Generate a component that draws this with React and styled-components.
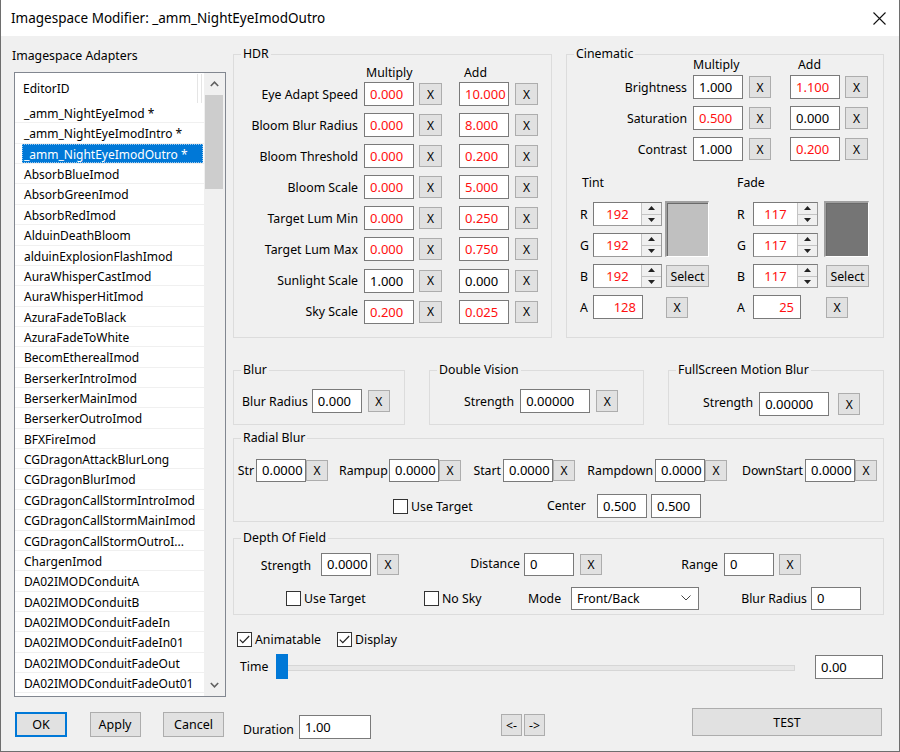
import React from "react";
import styled, { createGlobalStyle } from "styled-components";

const FONT = `"Noto Sans", "Open Sans", "DejaVu Sans", sans-serif`;

const GlobalStyle = createGlobalStyle`
  * { box-sizing: border-box; }
  html, body { margin: 0; padding: 0; background: #f0f0f0; }
  body { font-family: ${FONT}; font-size: 12.3px; color: #000; }
  input, button { font-family: inherit; }
`;

const Window = styled.div`
  width: 900px;
  height: 752px;
  display: flex;
  flex-direction: column;
  background: #f0f0f0;
  border: 1px solid #6e6e6e;
  border-top: 0;
  overflow: hidden;
`;

const TitleBar = styled.div`
  height: 36px;
  flex: none;
  background: #fff;
  display: flex;
  align-items: center;
  padding: 0 13px 0 10px;
  font-size: 13.5px;
`;

const Title = styled.div`
  flex: 1;
`;

const Body = styled.div`
  flex: 1;
  display: flex;
  min-height: 0;
`;

/* ---------- left pane ---------- */
const LeftPane = styled.div`
  width: 232px;
  flex: none;
  display: flex;
  flex-direction: column;
  padding: 12px 0 0 11px;
`;

const PaneLabel = styled.div`
  height: 16px;
  line-height: 16px;
  margin-bottom: 8px;
`;

const ListBox = styled.div`
  margin-left: 2px;
  width: 212px;
  height: 625px;
  flex: none;
  border: 1px solid #828790;
  background: #fff;
  display: flex;
  overflow: hidden;
`;

const ListMain = styled.div`
  width: 189px;
  flex: none;
  display: flex;
  flex-direction: column;
  overflow: hidden;
  font-size: 12px;
`;

const ListHeader = styled.div`
  height: 30px;
  flex: none;
  display: flex;
  align-items: center;
  padding: 1px 0 0 8px;
`;

const HeaderDivider = styled.div`
  margin-left: auto;
  margin-right: 2px;
  width: 5px;
  align-self: stretch;
  border-left: 1px solid #e5e5e5;
  border-right: 1px solid #e5e5e5;
`;

const ListRow = styled.div`
  height: 20.36px;
  flex: none;
  border-bottom: 1px solid #f0f0f0;
  display: flex;
  padding: 0 1px 0 7px;
`;

const ListText = styled.div`
  flex: 1;
  padding: 2px 0 0 2px;
  line-height: 17px;
  white-space: nowrap;
  overflow: hidden;
  background: ${(p) => (p.$selected ? "#0078d7" : "transparent")};
  color: ${(p) => (p.$selected ? "#fff" : "#000")};
  outline: ${(p) => (p.$selected ? "1px dotted rgba(255,255,255,0.6)" : "none")};
  outline-offset: -1px;
`;

const ScrollBar = styled.div`
  width: 21px;
  flex: none;
  display: flex;
  flex-direction: column;
  background: #f0f0f0;
`;

const ScrollButton = styled.div`
  height: 22px;
  flex: none;
  display: flex;
  align-items: center;
  justify-content: center;
`;

const ScrollThumb = styled.div`
  height: 94px;
  flex: none;
  margin: 0 2px 0 1px;
  background: #cdcdcd;
`;

const ScrollSpacer = styled.div`
  flex: 1;
`;

const Chevron = ({ up }) => (
  <svg width="9" height="6" viewBox="0 0 9 6">
    <path
      d={up ? "M0.8 5 L4.5 1.2 L8.2 5" : "M0.8 1 L4.5 4.8 L8.2 1"}
      stroke="#606060"
      strokeWidth="1.6"
      fill="none"
    />
  </svg>
);

const DialogButtons = styled.div`
  margin-top: 15px;
  width: 212px;
  padding-left: 3px;
  display: flex;
  justify-content: space-between;
`;

const DialogButton = styled.button`
  width: ${(p) => p.$w}px;
  height: 25px;
  padding: 0;
  background: #e1e1e1;
  border: 1px solid ${(p) => (p.$default ? "#0078d7" : "#adadad")};
  box-shadow: ${(p) => (p.$default ? "inset 0 0 0 1px #0078d7" : "none")};
  font-size: 12.5px;
  color: #000;
`;

/* ---------- right pane ---------- */
const RightPane = styled.div`
  flex: 1;
  display: flex;
  flex-direction: column;
  padding: 11px 15px 0 0;
`;

const TopRow = styled.div`
  display: flex;
  gap: 14px;
`;

const GroupBox = styled.fieldset`
  margin: 0;
  padding: 0;
  min-width: 0;
  border: 1px solid #dcdcdc;
  width: ${(p) => (p.$w ? `${p.$w}px` : "auto")};
  height: ${(p) => p.$h}px;
  flex: none;
  margin-top: ${(p) => p.$mt || 0}px;
`;

const Legend = styled.legend`
  margin-left: 7px;
  padding: 0 2px;
  font-size: 12.3px;
  line-height: 14px;
`;

const GroupContent = styled.div`
  display: flex;
  flex-direction: column;
  padding-top: ${(p) => p.$pt || 0}px;
`;

const ColHeaders = styled.div`
  display: grid;
  grid-template-columns: ${(p) => p.$cols};
  height: 14px;
  line-height: 14px;
  margin-top: ${(p) => p.$mt || 0}px;
  margin-bottom: ${(p) => p.$mb || 0}px;
`;

const ColHead = styled.div`
  grid-column: ${(p) => p.$col};
  padding-left: ${(p) => p.$pl || 0}px;
  white-space: nowrap;
`;

const ValueGrid = styled.div`
  display: grid;
  grid-template-columns: ${(p) => p.$cols};
  grid-auto-rows: 24px;
  row-gap: ${(p) => p.$gap}px;
  align-items: center;
  justify-items: start;
`;

const RowLabel = styled.div`
  justify-self: stretch;
  text-align: right;
  padding-right: 6px;
  white-space: nowrap;
`;

const ValueInput = styled.input`
  width: ${(p) => p.$w || 50}px;
  height: ${(p) => p.$h || 24}px;
  flex: none;
  margin: 0;
  margin-left: ${(p) => p.$ml || 0}px;
  padding: 0 ${(p) => (p.$align === "right" ? 6 : 2)}px 0 5px;
  border: 1px solid #7a7a7a;
  background: #fff;
  color: ${(p) => (p.$red ? "#ff1010" : "#000")};
  font-size: 13px;
  text-align: ${(p) => p.$align || "left"};
  outline: none;
`;

const XButton = styled.button`
  width: ${(p) => p.$w || 23}px;
  height: ${(p) => p.$h || 22}px;
  flex: none;
  margin: 0;
  margin-left: ${(p) => p.$ml || 0}px;
  padding: 0;
  background: #e1e1e1;
  border: 1px solid #adadad;
  font-size: 12px;
  color: #000;
`;

const Value = ({ v, red, ...rest }) => (
  <ValueInput readOnly value={v} $red={red} {...rest} />
);

/* color section */
const ColorRow = styled.div`
  display: flex;
  gap: 27px;
  margin-top: 15px;
  padding-left: 13px;
`;

const ColorGroup = styled.div`
  display: grid;
  grid-template-columns: ${(p) => `${p.$lw}px ${p.$sw + p.$gap}px 45px`};
  grid-template-rows: 19px repeat(4, 24px);
  row-gap: 7px;
  align-items: center;
  justify-items: start;
`;

const ColorHeader = styled.div`
  grid-column: 1 / -1;
  align-self: start;
  line-height: 14px;
  padding-left: ${(p) => p.$pl || 0}px;
`;

const Letter = styled.div`
  grid-column: 1;
`;

const SpinBox = styled.div`
  grid-column: 2;
  width: ${(p) => p.$w}px;
  height: 24px;
  display: flex;
  border: 1px solid #9a9a9a;
  border-top-color: #7a7a7a;
  border-left-color: #7a7a7a;
  background: #fff;
`;

const SpinValue = styled.div`
  flex: 1;
  text-align: center;
  line-height: 22px;
  color: #ff1010;
  font-size: 13px;
`;

const SpinButtons = styled.div`
  width: 20px;
  flex: none;
  display: flex;
  flex-direction: column;
  border-left: 1px solid #c4c4c4;
  background: #f0f0f0;
`;

const SpinHalf = styled.div`
  flex: 1;
  display: flex;
  align-items: center;
  justify-content: center;
  & + & {
    border-top: 1px solid #c4c4c4;
  }
`;

const Tri = ({ up }) => (
  <svg width="7" height="4" viewBox="0 0 7 4">
    <path d={up ? "M0 4 L3.5 0 L7 4 Z" : "M0 0 L3.5 4 L7 0 Z"} fill="#222" />
  </svg>
);

const Swatch = styled.div`
  grid-column: 3;
  grid-row: 2 / span 2;
  align-self: stretch;
  margin-top: -1px;
  width: ${(p) => p.$w}px;
  background: ${(p) => p.$c};
  border-top: 2px solid #a0a0a0;
  border-left: 2px solid #a0a0a0;
  border-right: 1px solid #fff;
  border-bottom: 1px solid #fff;
  box-shadow: inset 1px 1px 0 #6a6a6a;
`;

const SmallButton = styled.button`
  grid-column: 3;
  width: ${(p) => p.$w}px;
  height: ${(p) => p.$h}px;
  margin: 0;
  margin-left: ${(p) => p.$ml || 0}px;
  padding: 0;
  background: #e1e1e1;
  border: 1px solid #adadad;
  font-size: 12.3px;
  color: #000;
`;

const AInput = styled(ValueInput)`
  grid-column: 2;
`;

/* middle rows */
const MidRow = styled.div`
  display: flex;
  justify-content: space-between;
  margin-top: 25px;
`;

const InlineContent = styled.div`
  display: flex;
  align-items: center;
  padding: ${(p) => p.$pt}px 0 0 ${(p) => p.$pl}px;
`;

const InlineLabel = styled.span`
  white-space: nowrap;
  margin-right: ${(p) => p.$mr || 0}px;
  margin-top: ${(p) => p.$shift > 0 ? p.$shift * 2 : 0}px;
  margin-bottom: ${(p) => p.$shift < 0 ? -p.$shift * 2 : 0}px;
`;

const RadialRow = styled.div`
  display: flex;
  gap: 11px;
  align-items: center;
  padding-left: 3px;
`;

const RadialField = styled.div`
  display: grid;
  grid-template-columns: ${(p) => p.$lw}px 50px 22px;
  align-items: center;
  height: 24px;
`;

const FieldLabel = styled.div`
  text-align: ${(p) => p.$align || "right"};
  padding-right: ${(p) => (p.$pr === undefined ? 2 : p.$pr)}px;
  white-space: nowrap;
  width: ${(p) => (p.$w ? `${p.$w}px` : "auto")};
  flex: none;
  margin-top: ${(p) => p.$shift > 0 ? p.$shift * 2 : 0}px;
  margin-bottom: ${(p) => p.$shift < 0 ? -p.$shift * 2 : 0}px;
`;

const FlexRow = styled.div`
  display: flex;
  align-items: center;
  height: ${(p) => p.$h || 24}px;
  margin-top: ${(p) => p.$mt || 0}px;
  padding-left: ${(p) => p.$pl || 0}px;
`;

const CheckItem = styled.label`
  display: flex;
  align-items: center;
  width: ${(p) => (p.$w ? `${p.$w}px` : "auto")};
  flex: none;
  white-space: nowrap;
`;

const CheckBox = styled.span`
  width: 15px;
  height: 15px;
  flex: none;
  border: 1px solid #333;
  background: #fff;
  display: flex;
  align-items: center;
  justify-content: center;
  margin-right: 3px;
`;

const Check = ({ checked }) => (
  <CheckBox>
    {checked && (
      <svg width="11" height="9" viewBox="0 0 11 9">
        <path d="M0.8 4.6 L3.8 7.6 L10.2 1" stroke="#222" strokeWidth="1.2" fill="none" />
      </svg>
    )}
  </CheckBox>
);

const ComboBox = styled.div`
  width: ${(p) => p.$w}px;
  height: 23px;
  flex: none;
  display: flex;
  align-items: center;
  justify-content: space-between;
  padding: 0 7px 0 5px;
  background: #fff;
  border: 1px solid #7a7a7a;
`;

/* time + bottom */
const Slider = styled.div`
  position: relative;
  width: 519px;
  height: 25px;
  flex: none;
  display: flex;
  align-items: center;
  &::before {
    content: "";
    position: absolute;
    left: 6px;
    right: 0;
    top: 11px;
    height: 4px;
    background: #e7e7e7;
    border: 1px solid #d6d6d6;
  }
`;

const SliderThumb = styled.div`
  position: relative;
  width: 12px;
  height: 25px;
  background: #0078d7;
`;

const BottomRow = styled.div`
  display: flex;
  align-items: flex-start;
  margin-top: 28px;
`;

const DurationGroup = styled.div`
  display: flex;
  align-items: center;
  margin: 7px 0 0 10px;
`;

const NavGroup = styled.div`
  display: flex;
  gap: 2px;
  margin: 6px 0 0 130px;
`;

const TestButton = styled.button`
  margin: 0 2px 0 auto;
  width: 190px;
  height: 28px;
  padding: 0;
  background: #e1e1e1;
  border: 1px solid #adadad;
  font-size: 12.3px;
  color: #000;
`;

/* ---------- data ---------- */
const adapters = [
  "_amm_NightEyeImod *",
  "_amm_NightEyeImodIntro *",
  "_amm_NightEyeImodOutro *",
  "AbsorbBlueImod",
  "AbsorbGreenImod",
  "AbsorbRedImod",
  "AlduinDeathBloom",
  "alduinExplosionFlashImod",
  "AuraWhisperCastImod",
  "AuraWhisperHitImod",
  "AzuraFadeToBlack",
  "AzuraFadeToWhite",
  "BecomEtherealImod",
  "BerserkerIntroImod",
  "BerserkerMainImod",
  "BerserkerOutroImod",
  "BFXFireImod",
  "CGDragonAttackBlurLong",
  "CGDragonBlurImod",
  "CGDragonCallStormIntroImod",
  "CGDragonCallStormMainImod",
  "CGDragonCallStormOutroI...",
  "ChargenImod",
  "DA02IMODConduitA",
  "DA02IMODConduitB",
  "DA02IMODConduitFadeIn",
  "DA02IMODConduitFadeIn01",
  "DA02IMODConduitFadeOut",
  "DA02IMODConduitFadeOut01",
];

const hdrRows = [
  ["Eye Adapt Speed", "0.000", true, "10.000", true],
  ["Bloom Blur Radius", "0.000", true, "8.000", true],
  ["Bloom Threshold", "0.000", true, "0.200", true],
  ["Bloom Scale", "0.000", true, "5.000", true],
  ["Target Lum Min", "0.000", true, "0.250", true],
  ["Target Lum Max", "0.000", true, "0.750", true],
  ["Sunlight Scale", "1.000", false, "0.000", false],
  ["Sky Scale", "0.200", true, "0.025", true],
];

const cinRows = [
  ["Brightness", "1.000", false, "1.100", true],
  ["Saturation", "0.500", true, "0.000", false],
  ["Contrast", "1.000", false, "0.200", true],
];

const HDR_COLS = "130px 55px 40px 56px 23px";
const CIN_COLS = "126px 56px 41px 55px 23px";

function Spin({ w, v }) {
  return (
    <SpinBox $w={w}>
      <SpinValue>{v}</SpinValue>
      <SpinButtons>
        <SpinHalf>
          <Tri up />
        </SpinHalf>
        <SpinHalf>
          <Tri />
        </SpinHalf>
      </SpinButtons>
    </SpinBox>
  );
}

function ColorBlock({ title, lw, sw, gap, value, alpha, color, aw, btnMl, swW }) {
  return (
    <ColorGroup $lw={lw} $sw={sw} $gap={gap}>
      <ColorHeader $pl={title === "Tint" ? 2 : 0}>{title}</ColorHeader>
      <Letter>R</Letter>
      <Spin w={sw} v={value} />
      <Swatch $c={color} $w={swW} />
      <Letter>G</Letter>
      <Spin w={sw} v={value} />
      <Letter>B</Letter>
      <Spin w={sw} v={value} />
      <SmallButton $w={43} $h={22} $ml={btnMl}>Select</SmallButton>
      <Letter>A</Letter>
      <AInput readOnly value={alpha} $red $w={aw} $align="right" />
      <SmallButton $w={22} $h={21} $ml={btnMl}>X</SmallButton>
    </ColorGroup>
  );
}

export default function App() {
  return (
    <>
      <GlobalStyle />
      <Window>
        <TitleBar>
          <Title>Imagespace Modifier: _amm_NightEyeImodOutro</Title>
          <svg width="13" height="13" viewBox="0 0 13 13">
            <path d="M0.5 0.5 L12.5 12.5 M12.5 0.5 L0.5 12.5" stroke="#111" strokeWidth="1.1" />
          </svg>
        </TitleBar>
        <Body>
          <LeftPane>
            <PaneLabel>Imagespace Adapters</PaneLabel>
            <ListBox>
              <ListMain>
                <ListHeader>
                  <span>EditorID</span>
                  <HeaderDivider />
                </ListHeader>
                {adapters.map((a, i) => (
                  <ListRow key={a}>
                    <ListText $selected={i === 2}>{a}</ListText>
                  </ListRow>
                ))}
              </ListMain>
              <ScrollBar>
                <ScrollButton>
                  <Chevron up />
                </ScrollButton>
                <ScrollThumb />
                <ScrollSpacer />
                <ScrollButton>
                  <Chevron />
                </ScrollButton>
              </ScrollBar>
            </ListBox>
            <DialogButtons>
              <DialogButton $w={52} $default>OK</DialogButton>
              <DialogButton $w={51}>Apply</DialogButton>
              <DialogButton $w={61}>Cancel</DialogButton>
            </DialogButtons>
          </LeftPane>

          <RightPane>
            <TopRow>
              <GroupBox $w={319} $h={291}>
                <Legend>HDR</Legend>
                <GroupContent $pt={5}>
                  <ColHeaders $cols={HDR_COLS} $mb={2}>
                    <ColHead $col={2} $pl={2}>Multiply</ColHead>
                    <ColHead $col={4} $pl={5}>Add</ColHead>
                  </ColHeaders>
                  <ValueGrid $cols={HDR_COLS} $gap={7.1}>
                    {hdrRows.map(([label, m, mr, a, ar]) => (
                      <React.Fragment key={label}>
                        <RowLabel>{label}</RowLabel>
                        <Value v={m} red={mr} />
                        <XButton>X</XButton>
                        <Value v={a} red={ar} />
                        <XButton>X</XButton>
                      </React.Fragment>
                    ))}
                  </ValueGrid>
                </GroupContent>
              </GroupBox>

              <GroupBox $w={318} $h={291}>
                <Legend>Cinematic</Legend>
                <GroupContent>
                  <ColHeaders $cols={CIN_COLS} $mt={-3} $mb={3}>
                    <ColHead $col={2} $pl={0}>Multiply</ColHead>
                    <ColHead $col={4} $pl={8}>Add</ColHead>
                  </ColHeaders>
                  <ValueGrid $cols={CIN_COLS} $gap={7}>
                    {cinRows.map(([label, m, mr, a, ar]) => (
                      <React.Fragment key={label}>
                        <RowLabel>{label}</RowLabel>
                        <Value v={m} red={mr} />
                        <XButton $w={22}>X</XButton>
                        <Value v={a} red={ar} />
                        <XButton>X</XButton>
                      </React.Fragment>
                    ))}
                  </ValueGrid>
                  <ColorRow>
                    <ColorBlock title="Tint" lw={13} sw={69} gap={3} value="192" alpha="128" color="#c0c0c0" aw={50} btnMl={1} swW={44} />
                    <ColorBlock title="Fade" lw={16} sw={65} gap={6} value="117" alpha="25" color="#757575" aw={48} btnMl={2} swW={45} />
                  </ColorRow>
                </GroupContent>
              </GroupBox>
            </TopRow>

            <MidRow>
              <GroupBox $w={172} $h={62}>
                <Legend>Blur</Legend>
                <InlineContent $pt={12} $pl={8}>
                  <InlineLabel $mr={4}>Blur Radius</InlineLabel>
                  <Value v="0.000" />
                  <XButton $ml={6} $w={22}>X</XButton>
                </InlineContent>
              </GroupBox>
              <GroupBox $w={215} $h={62}>
                <Legend>Double Vision</Legend>
                <InlineContent $pt={12} $pl={34}>
                  <InlineLabel $mr={6}>Strength</InlineLabel>
                  <Value v="0.00000" $w={70} />
                  <XButton $ml={6} $w={22}>X</XButton>
                </InlineContent>
              </GroupBox>
              <GroupBox $w={216} $h={62}>
                <Legend>FullScreen Motion Blur</Legend>
                <InlineContent $pt={15} $pl={34}>
                  <InlineLabel $mr={6} $shift={-2}>Strength</InlineLabel>
                  <Value v="0.00000" $w={70} />
                  <XButton $ml={9} $w={22}>X</XButton>
                </InlineContent>
              </GroupBox>
            </MidRow>

            <GroupBox $h={91} $mt={6}>
              <Legend>Radial Blur</Legend>
              <GroupContent $pt={13}>
                <RadialRow>
                  {[
                    ["Str", 19],
                    ["Rampup", 50],
                    ["Start", 31],
                    ["Rampdown", 69],
                    ["DownStart", 67],
                  ].map(([l, lw]) => (
                    <RadialField key={l} $lw={lw}>
                      <FieldLabel $pr={2}>{l}</FieldLabel>
                      <Value v="0.0000" $h={23} />
                      <XButton $w={22} $h={21}>X</XButton>
                    </RadialField>
                  ))}
                </RadialRow>
                <FlexRow $mt={12} $pl={159}>
                  <CheckItem $w={154}>
                    <Check />
                    Use Target
                  </CheckItem>
                  <FieldLabel $w={50} $align="left" $pr={0} $shift={-1}>Center</FieldLabel>
                  <Value v="0.500" />
                  <Value v="0.500" $ml={4} />
                </FlexRow>
              </GroupContent>
            </GroupBox>

            <GroupBox $h={84} $mt={9}>
              <Legend>Depth Of Field</Legend>
              <GroupContent $pt={7}>
                <FlexRow>
                  <FieldLabel $w={87} $pr={10} $shift={1}>Strength</FieldLabel>
                  <Value v="0.0000" $h={23} />
                  <XButton $ml={6} $w={22} $h={21}>X</XButton>
                  <FieldLabel $w={125} $pr={4} $shift={-1}>Distance</FieldLabel>
                  <Value v="0" $h={23} />
                  <XButton $ml={6} $w={22} $h={21}>X</XButton>
                  <FieldLabel $w={122} $pr={6}>Range</FieldLabel>
                  <Value v="0" $h={23} />
                  <XButton $ml={5} $w={22} $h={21}>X</XButton>
                </FlexRow>
                <FlexRow $mt={10} $pl={52}>
                  <CheckItem $w={138}>
                    <Check />
                    Use Target
                  </CheckItem>
                  <CheckItem $w={104}>
                    <Check />
                    No Sky
                  </CheckItem>
                  <FieldLabel $w={43} $align="left" $pr={0}>Mode</FieldLabel>
                  <ComboBox $w={128}>
                    <span>Front/Back</span>
                    <svg width="10" height="6" viewBox="0 0 10 6">
                      <path d="M0.5 0.5 L5 5 L9.5 0.5" stroke="#444" strokeWidth="1" fill="none" />
                    </svg>
                  </ComboBox>
                  <FieldLabel $w={112} $pr={4}>Blur Radius</FieldLabel>
                  <Value v="0" $h={23} />
                </FlexRow>
              </GroupContent>
            </GroupBox>

            <FlexRow $h={16} $mt={16} $pl={4}>
              <CheckItem $w={100}>
                <Check checked />
                Animatable
              </CheckItem>
              <CheckItem>
                <Check checked />
                Display
              </CheckItem>
            </FlexRow>

            <FlexRow $h={27} $mt={6} $pl={7}>
              <FieldLabel $w={36} $align="left" $pr={0}>Time</FieldLabel>
              <Slider>
                <SliderThumb />
              </Slider>
              <Value v="0.00" $w={68} $ml={20} />
            </FlexRow>

            <BottomRow>
              <DurationGroup>
                <InlineLabel $mr={5} $shift={2}>Duration</InlineLabel>
                <Value v="1.00" $w={72} />
              </DurationGroup>
              <NavGroup>
                <SmallButton $w={21} $h={22}>&lt;-</SmallButton>
                <SmallButton $w={21} $h={22}>-&gt;</SmallButton>
              </NavGroup>
              <TestButton>TEST</TestButton>
            </BottomRow>
          </RightPane>
        </Body>
      </Window>
    </>
  );
}
